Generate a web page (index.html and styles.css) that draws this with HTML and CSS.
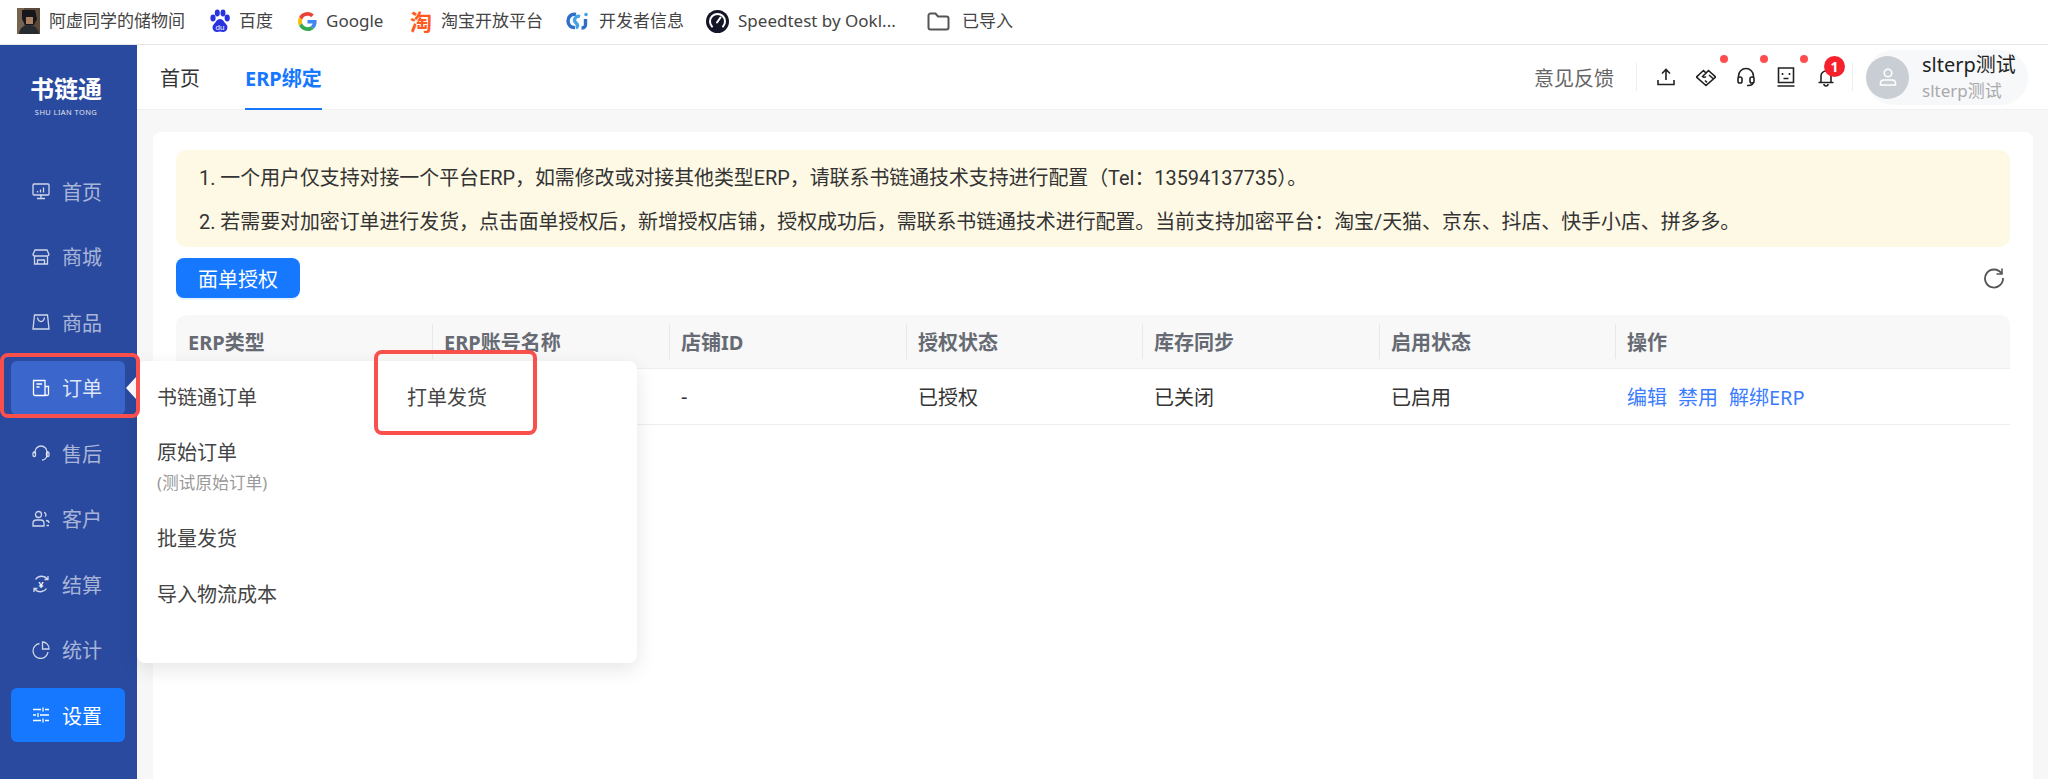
FILE: index.html
```html
<!DOCTYPE html>
<html lang="zh-CN">
<head>
    <meta charset="UTF-8">
    <meta name="viewport" content="width=device-width, initial-scale=1.0">
    <title>ERP绑定</title>
    <link rel="stylesheet" href="styles.css">
</head>
<body>
    <div class="bookmarks">
        <a class="bookmark bm-user">
            <svg width="23" height="26" viewBox="0 0 23 26"><rect width="23" height="26" fill="#5b4a3a"/><rect x="0" y="0" width="7" height="26" fill="#76644e"/><path d="M5 2h13l2 9-3 6H8l-3-6z" fill="#17161b"/><path d="M9 9h7v7H9z" fill="#a98063"/><path d="M2 26c1-7 5-9 10-9s9 3 10 9z" fill="#262a31"/></svg>
            <span>阿虚同学的储物间</span>
        </a>
        <a class="bookmark bm-baidu">
            <svg width="20" height="24" viewBox="0 0 20 24" fill="#2932e1"><ellipse cx="3" cy="9" rx="2.6" ry="3.4"/><ellipse cx="7.3" cy="4" rx="2.5" ry="3.4"/><ellipse cx="13" cy="4" rx="2.5" ry="3.4"/><ellipse cx="17.2" cy="9" rx="2.6" ry="3.4"/><path d="M10 10c3 0 4 3 6 5 3 3 1 8-3 8-1 0-2-.5-3-.5s-2 .5-3 .5c-4 0-6-5-3-8 2-2 3-5 6-5z"/><text x="10" y="21" class="bm-du">du</text></svg>
            <span>百度</span>
        </a>
        <a class="bookmark bm-google">
            <svg width="19" height="19" viewBox="0 0 48 48"><path fill="#ea4335" d="M24 9.500c3.500 0 6.700 1.300 9.100 3.500l6.800-6.800C35.800 2.400 30.300 0 24 0 14.600 0 6.500 5.400 2.600 13.200l7.900 6.200C12.400 13.700 17.700 9.500 24 9.500z"/><path fill="#4285f4" d="M47 24.500c0-1.600-.1-3.100-.4-4.500H24v9h13c-.6 3-2.300 5.500-4.800 7.200l7.700 6C44.400 38 47 31.800 47 24.500z"/><path fill="#fbbc05" d="M10.500 28.600c-.5-1.400-.8-3-.8-4.600s.3-3.200.8-4.600l-7.900-6.200C.9 16.500 0 20.100 0 24s.9 7.500 2.600 10.800z"/><path fill="#34a853" d="M24 48c6.500 0 11.900-2.100 15.900-5.800l-7.700-6c-2.200 1.500-4.900 2.300-8.200 2.300-6.300 0-11.600-4.200-13.500-9.900l-7.900 6.200C6.500 42.600 14.600 48 24 48z"/></svg>
            <span>Google</span>
        </a>
        <a class="bookmark bm-taobao">
            <span class="taobao-mark">淘</span>
            <span>淘宝开放平台</span>
        </a>
        <a class="bookmark bm-dev">
            <svg width="24" height="20" viewBox="0 0 24 20" fill="none" stroke-width="3.400"><path d="M10 3.500C5 2.500 2 6 2 10s3 7 7 6.500" stroke="#2f6fc9"/><path d="M14 5.500c-3-1-5.500 1-5.500 4 0 2 3 2.500 3 5 0 1-.5 2-1.500 2.500" stroke="#44a2e6"/><path d="M19.500 8v6c0 2-2 3-4 3" stroke="#2f6fc9"/><circle cx="20" cy="3.500" r="1.800" fill="#44a2e6" stroke="none"/></svg>
            <span>开发者信息</span>
        </a>
        <a class="bookmark bm-speed">
            <svg width="23" height="23" viewBox="0 0 23 23"><circle cx="11.500" cy="11.500" r="11.500" fill="#141526"/><path d="M6 16.500a7.500 7.500 0 1 1 11 0" fill="none" stroke="#fff" stroke-width="2" stroke-linecap="round"/><path d="M11 12.500l3.500-5" stroke="#fff" stroke-width="2" stroke-linecap="round"/></svg>
            <span>Speedtest by Ookl...</span>
        </a>
        <a class="bookmark bm-folder">
            <svg width="23" height="19" viewBox="0 0 23 19" fill="none" stroke="#555" stroke-width="2"><path d="M1.500 3.500a2 2 0 0 1 2-2h5l2.500 3h8.500a2 2 0 0 1 2 2v9a2 2 0 0 1-2 2h-16a2 2 0 0 1-2-2z"/></svg>
            <span>已导入</span>
        </a>
    </div>

    <div class="app">
        <aside class="sidebar">
            <div class="logo">
                <div class="logo-name">书链通</div>
                <div class="logo-sub">SHU LIAN TONG</div>
            </div>
            <nav class="nav">
                <a class="nav-item">
                    <svg viewBox="0 0 18 18"><rect x="1" y="2" width="16" height="11" rx="1"/><path d="M9 13v3M5 16.500h8M5.500 10.500v-1.500M8.500 10.500v-3M11.500 10.500v-5"/></svg>
                    <span>首页</span>
                </a>
                <a class="nav-item">
                    <svg viewBox="0 0 18 18"><path d="M3 2h12l2 4.500c0 1-1 1.500-2 1.500H3c-1 0-2-.5-2-1.500zM2.500 8v8h13V8M5.500 16v-4h7v4"/></svg>
                    <span>商城</span>
                </a>
                <a class="nav-item">
                    <svg viewBox="0 0 18 18"><path d="M2.500 2h13l1.500 14H1zM5.500 4.500c.5 3 2 4 3.500 4s3-1 3.500-4"/></svg>
                    <span>商品</span>
                </a>
                <a class="nav-item nav-open">
                    <svg viewBox="0 0 18 18"><path d="M13 16.500H3a1.500 1.500 0 0 1-1.500-1.500V1.500H13zM13 7.500h3.500V15a1.500 1.500 0 0 1-3 0M4.500 5H10M4.500 8h3"/></svg>
                    <span>订单</span>
                    <i class="nav-arrow"></i>
                </a>
                <a class="nav-item">
                    <svg viewBox="0 0 18 18"><path d="M3 9.500V8a6 6 0 0 1 12 0v3c0 3-2.500 5-5 5"/><rect x="1" y="8" width="2.500" height="4.500" rx="1.200"/><rect x="14.500" y="8" width="2.500" height="4.500" rx="1.200"/></svg>
                    <span>售后</span>
                </a>
                <a class="nav-item">
                    <svg viewBox="0 0 18 18"><circle cx="6.500" cy="4.500" r="3"/><path d="M1 16v-2.500c0-2 1.500-3.500 3.500-3.500h4c2 0 3.500 1.500 3.500 3.500V16zM12 2.500a2.200 2.200 0 0 1 1 4M14 10.500c2 0 3 1 3 2.500M14.500 15.500H17"/></svg>
                    <span>客户</span>
                </a>
                <a class="nav-item">
                    <svg viewBox="0 0 18 18"><path d="M3.500 4.500A7.500 7.500 0 0 1 15.500 4M14.500 13.500A7.500 7.500 0 0 1 2.500 14M12.500 4.500h3.500V1M5.500 13.500H2V17"/><text x="9" y="13" class="nav-yen">¥</text></svg>
                    <span>结算</span>
                </a>
                <a class="nav-item">
                    <svg viewBox="0 0 18 18"><path d="M7.500 2.500a7.500 7.500 0 1 0 8.500 8.500"/><path d="M10.500 1a6.500 6.500 0 0 1 6.500 7h-6.500z"/></svg>
                    <span>统计</span>
                </a>
                <a class="nav-item nav-active">
                    <svg viewBox="0 0 18 18"><path d="M1 3.500h8M13 3.500h4M1 9h3M8 9h9M1 14.500h8M13 14.500h4M11 1.500v4M6 7v4M11 12.500v4"/></svg>
                    <span>设置</span>
                </a>
            </nav>
        </aside>

        <div class="main">
            <header class="topbar">
                <div class="tabs">
                    <a class="tab">首页</a>
                    <a class="tab tab-active">ERP绑定</a>
                </div>
                <div class="top-right">
                    <a class="feedback">意见反馈</a>
                    <div class="top-icons">
                        <a class="top-icon">
                            <svg viewBox="0 0 20 20"><path d="M10 13V3M6 6.500L10 2.500l4 4M2 13v4.500h16V13"/></svg>
                        </a>
                        <a class="top-icon has-dot">
                            <svg viewBox="0 0 20 20"><path d="M0.500 10L7.500 3.500 10 6l2.500-2.500L19.500 10 10 18.500zM10 6L6.500 9.500c1 1.200 2.500 1 3.500 0M13 8l4 3.500M9 13.500l2 2"/></svg>
                        </a>
                        <a class="top-icon has-dot">
                            <svg viewBox="0 0 20 20"><path d="M2.500 11V9a7.500 7.500 0 0 1 15 0v2M17 15c0 2-1.500 3.500-4.500 3.500H11"/><rect x="2" y="10" width="4" height="6" rx="1.800"/><rect x="14" y="10" width="4" height="6" rx="1.800"/></svg>
                        </a>
                        <a class="top-icon has-dot">
                            <svg viewBox="0 0 20 20"><path d="M2.500 1h15v14.500h-15zM1.500 19h17M6.500 6v2M13.500 6v2M7.500 11.500h5"/></svg>
                        </a>
                        <a class="top-icon has-badge">
                            <svg viewBox="0 0 20 20"><path d="M2.500 15.500h15M5 15.500V9a5 5 0 0 1 10 0v6.500M8 17a2 2 0 0 0 4 0M10 4V2.500"/></svg>
                            <b class="badge">1</b>
                        </a>
                    </div>
                    <div class="user">
                        <div class="avatar">
                            <svg width="20" height="20" viewBox="0 0 20 20" fill="none" stroke="#fff" stroke-width="1.600"><circle cx="10" cy="6" r="3.800"/><path d="M2.500 18v-1.500c0-2 1.500-3.500 3.500-3.500h8c2 0 3.500 1.500 3.500 3.500V18z"/></svg>
                        </div>
                        <div class="user-text">
                            <div class="user-name">slterp测试</div>
                            <div class="user-sub">slterp测试</div>
                        </div>
                    </div>
                </div>
            </header>

            <div class="content">
                <div class="card">
                    <div class="notice">
                        <p>1. 一个用户仅支持对接一个平台ERP，如需修改或对接其他类型ERP，请联系书链通技术支持进行配置（Tel：13594137735）。</p>
                        <p>2. 若需要对加密订单进行发货，点击面单授权后，新增授权店铺，授权成功后，需联系书链通技术进行配置。当前支持加密平台：淘宝/天猫、京东、抖店、快手小店、拼多多。</p>
                    </div>
                    <div class="toolbar">
                        <button class="btn-primary">面单授权</button>
                        <svg class="refresh" width="22" height="22" viewBox="0 0 22 22" fill="none" stroke="#555" stroke-width="1.800"><path d="M18.500 6.500A9 9 0 1 0 20 11"/><path d="M19 1.500v5.500h-5.500" stroke-width="1.600"/></svg>
                    </div>
                    <div class="table">
                        <div class="row row-head">
                            <div class="cell">ERP类型</div>
                            <div class="cell">ERP账号名称</div>
                            <div class="cell">店铺ID</div>
                            <div class="cell">授权状态</div>
                            <div class="cell">库存同步</div>
                            <div class="cell">启用状态</div>
                            <div class="cell">操作</div>
                        </div>
                        <div class="row">
                            <div class="cell"></div>
                            <div class="cell"></div>
                            <div class="cell">-</div>
                            <div class="cell">已授权</div>
                            <div class="cell">已关闭</div>
                            <div class="cell">已启用</div>
                            <div class="cell cell-links"><a>编辑</a><a>禁用</a><a>解绑ERP</a></div>
                        </div>
                    </div>
                </div>
            </div>
        </div>

        <!-- order submenu, opened from the sidebar -->
        <div class="submenu">
            <div class="sub-col">
                <a class="sub-item sub-first">书链通订单</a>
                <a class="sub-item sub-double">原始订单<small>(测试原始订单)</small></a>
                <a class="sub-item">批量发货</a>
                <a class="sub-item">导入物流成本</a>
            </div>
            <div class="sub-col">
                <a class="sub-item">打单发货</a>
            </div>
        </div>

        <!-- red annotation boxes from the screenshot -->
        <div class="mark mark-nav"></div>
        <div class="mark mark-sub"></div>
    </div>
</body>
</html>
```

FILE: styles.css
```css
* {
    box-sizing: border-box;
}
html, body {
    height: 100%;
}
body {
    margin: 0;
    display: flex;
    flex-direction: column;
    overflow: hidden;
    background: #fff;
    color: #333;
    font-family: "Noto Sans", "Noto Sans CJK SC", sans-serif;
    font-size: 20px;
}

/* browser bookmark bar */
.bookmarks {
    height: 45px;
    flex: none;
    display: flex;
    align-items: center;
    padding: 0 0 2px 17px;
    border-bottom: 1px solid #e6e6e6;
    font-size: 17px;
    color: #444;
}
.bookmark {
    display: flex;
    align-items: center;
    gap: 9px;
    line-height: 24px;
    white-space: nowrap;
}
.bm-user { width: 193px; }
.bm-baidu { width: 88px; }
.bm-google { width: 112px; }
.bm-taobao { width: 156px; }
.bm-dev { width: 140px; }
.bm-speed { width: 221px; }
.bm-folder { gap: 12px; }
.bm-du {
    font-size: 8px;
    fill: #fff;
    text-anchor: middle;
    font-family: "Liberation Sans", sans-serif;
}
.taobao-mark {
    width: 22px;
    font-size: 22px;
    line-height: 22px;
    font-weight: 700;
    color: #ff5a1f;
}

.app {
    position: relative;
    flex: 1;
    display: flex;
    min-height: 0;
}

/* sidebar */
.sidebar {
    width: 137px;
    flex: none;
    background: #2a4a9f;
}
.logo {
    height: 119px;
    padding: 26px 5px 0 0;
    text-align: center;
    color: #fff;
}
.logo-name {
    font-size: 24px;
    line-height: 36px;
    font-weight: 700;
}
.logo-sub {
    font-size: 7.500px;
    line-height: 10px;
    letter-spacing: 0.4px;
    opacity: 0.85;
}
.nav {
    display: flex;
    flex-direction: column;
    gap: 11.5px;
    padding: 0 12px 0 11px;
}
.nav-item {
    position: relative;
    height: 54px;
    display: flex;
    align-items: center;
    gap: 12px;
    padding-left: 21px;
    border-radius: 6px;
    color: rgba(255, 255, 255, 0.6);
}
.nav-item svg {
    width: 18px;
    height: 18px;
    flex: none;
    fill: none;
    stroke: rgba(255, 255, 255, 0.78);
    stroke-width: 1.3;
}
.nav-yen {
    font-size: 9px;
    font-weight: 700;
    text-anchor: middle;
    fill: #fff;
    stroke: none;
    font-family: "Liberation Sans", sans-serif;
}
.nav-open {
    background: #3b66cc;
    color: rgba(255, 255, 255, 0.85);
}
.nav-open svg {
    stroke: #fff;
}
.nav-active {
    background: #1677ff;
    color: #fff;
}
.nav-active svg {
    stroke: #fff;
}
.nav-arrow {
    position: absolute;
    left: 115px;
    top: 16px;
    border: 11px solid transparent;
    border-left: 0;
    border-right: 10px solid #fff;
}

/* header */
.main {
    flex: 1;
    min-width: 0;
    display: flex;
    flex-direction: column;
    background: #f7f7f7;
}
.topbar {
    height: 65px;
    flex: none;
    display: flex;
    justify-content: space-between;
    align-items: stretch;
    padding: 0 20px 0 23px;
    background: #fff;
    border-bottom: 1px solid #f0f0f0;
}
.tabs {
    display: flex;
    gap: 45px;
}
.tab {
    position: relative;
    display: flex;
    align-items: center;
    color: #333;
}
.tab-active {
    color: #1677ff;
    font-weight: 700;
}
.tab-active::after {
    content: "";
    position: absolute;
    left: 0;
    right: 0;
    bottom: -1px;
    height: 2px;
    background: #1677ff;
}
.top-right {
    display: flex;
    align-items: center;
}
.feedback {
    height: 28px;
    padding-right: 22px;
    border-right: 1px solid #eee;
    line-height: 31px;
    color: #666;
}
.top-icons {
    display: flex;
    align-items: center;
    gap: 20px;
    height: 28px;
    padding: 0 16px 0 19px;
    border-right: 1px solid #eee;
}
.top-icon {
    position: relative;
    width: 20px;
    height: 20px;
}
.top-icon svg {
    display: block;
    width: 20px;
    height: 20px;
    fill: none;
    stroke: #222;
    stroke-width: 1.6;
}
.has-dot::after {
    content: "";
    position: absolute;
    right: -12px;
    top: -12px;
    width: 8px;
    height: 8px;
    border-radius: 50%;
    background: #ff4d4f;
}
.badge {
    position: absolute;
    left: 8px;
    top: -11px;
    width: 21px;
    height: 21px;
    border-radius: 50%;
    background: #f5222d;
    color: #fff;
    font-size: 14px;
    line-height: 21px;
    text-align: center;
    font-weight: 700;
}
.user {
    display: flex;
    align-items: center;
    gap: 13px;
    width: 162px;
    height: 55px;
    margin-left: 13px;
    border-radius: 28px;
    background: #f7f8fa;
}
.avatar {
    width: 43px;
    height: 43px;
    flex: none;
    display: flex;
    align-items: center;
    justify-content: center;
    border-radius: 50%;
    background: #c9cdd4;
}
.user-name {
    line-height: 28px;
    color: #222;
}
.user-sub {
    font-size: 17px;
    line-height: 24px;
    color: #aaa;
}

/* page content */
.content {
    flex: 1;
    min-height: 0;
    padding: 22px 15px 0 16px;
}
.card {
    height: 100%;
    padding: 18px 23px;
    background: #fff;
    border-radius: 8px 8px 0 0;
}
.notice {
    height: 97px;
    padding: 7px 23px;
    border-radius: 10px;
    background: #fef9e5;
    font-family: "Roboto", "Noto Sans CJK SC", sans-serif;
    font-size: 19.9px;
    line-height: 43.5px;
}
.notice p {
    margin: 0;
    white-space: nowrap;
}
.toolbar {
    display: flex;
    justify-content: space-between;
    align-items: center;
    margin-top: 11px;
}
.btn-primary {
    width: 124px;
    height: 40px;
    padding: 0;
    border: 0;
    border-radius: 8px;
    background: #1677ff;
    box-shadow: 0 2px 0 rgba(5, 145, 255, 0.1);
    color: #fff;
    font: inherit;
}
.refresh {
    margin-right: 5px;
}
.table {
    margin-top: 17px;
}
.row {
    display: grid;
    grid-template-columns: 256px 237px 237px 236px 237px 236px 1fr;
    height: 56px;
    border-bottom: 1px solid #eee;
    align-items: center;
}
.row-head {
    height: 54px;
    background: #f8f8f8;
    border-radius: 10px 10px 0 0;
    color: #666b73;
    font-weight: 700;
}
.cell {
    position: relative;
    padding-left: 12px;
    white-space: nowrap;
}
.row-head .cell + .cell::before {
    content: "";
    position: absolute;
    left: 0;
    top: -3px;
    bottom: -3px;
    border-left: 1px solid #e8e8e8;
}
.cell-links {
    display: flex;
    gap: 11px;
    color: #3b7cff;
}

/* order submenu */
.submenu {
    position: absolute;
    left: 137px;
    top: 316px;
    width: 500px;
    height: 302px;
    display: flex;
    padding: 15px 20px;
    border-radius: 8px;
    background: #fff;
    box-shadow: 0 6px 20px rgba(0, 0, 0, 0.1);
}
.sub-col {
    width: 250px;
    flex: none;
    display: flex;
    flex-direction: column;
}
.sub-col + .sub-col {
    width: 210px;
}
.sub-item {
    display: block;
    height: 56px;
    line-height: 44px;
    color: #444;
}
.sub-first {
    height: 55px;
}
.sub-double {
    height: 86px;
}
.sub-double small {
    display: block;
    margin-top: -4px;
    font-size: 16.5px;
    letter-spacing: 0.2px;
    line-height: 24px;
    color: #999;
}

/* annotation boxes */
.mark {
    position: absolute;
    border: 4px solid #f9504e;
    border-radius: 8px;
}
.mark-nav {
    left: 0;
    top: 308px;
    width: 140px;
    height: 65px;
}
.mark-sub {
    left: 374px;
    top: 305px;
    width: 163px;
    height: 85px;
}
```
